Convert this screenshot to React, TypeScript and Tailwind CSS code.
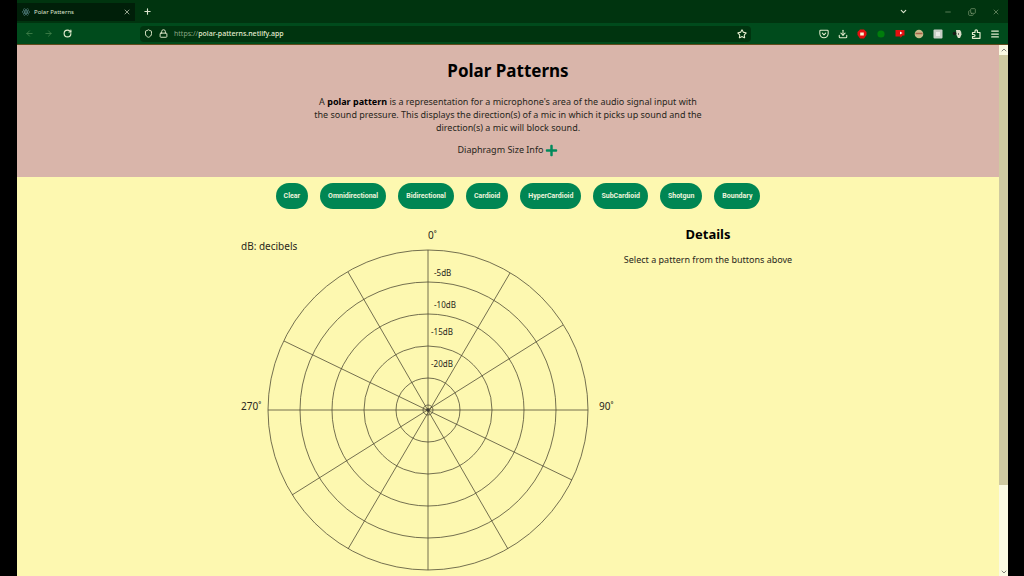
import React from "react";
import { ArrowLeft, ArrowRight, ChevronDown, ChevronUp, Copy, Download, Lock, Menu, Minus, Plus, RotateCw, Shield, Star, X } from "lucide-react";
import { FaReact, FaPlus } from "react-icons/fa";
import { FiPocket } from "react-icons/fi";

const patterns = ["Clear", "Omnidirectional", "Bidirectional", "Cardioid", "HyperCardioid", "SubCardioid", "Shotgun", "Boundary"];

const spokes = [
  [200, 20, 200, 340],
  [40, 180, 360, 180],
  [120, 42, 280, 319],
  [282, 43, 120, 319],
  [335, 95, 64, 265],
  [56, 111, 344, 250],
];

function PolarGrid() {
  return (
    <svg viewBox="0 -4 390 354" className="block h-auto w-full" fill="none" stroke="#514c36" strokeWidth="0.8" role="img" aria-label="Polar grid">
      {[160, 128, 96, 64, 32, 5].map((r) => (
        <circle key={r} cx="200" cy="180" r={r} />
      ))}
      {spokes.map(([x1, y1, x2, y2]) => (
        <line key={`${x1}-${y1}`} x1={x1} y1={y1} x2={x2} y2={y2} />
      ))}
      <circle cx="200" cy="180" r="1.5" fill="#333" />
      <g fill="#28261b" stroke="none" fontSize="10">
        <text x="200" y="9">0˚</text>
        <text x="13" y="20">dB: decibels</text>
        <text x="13" y="180">270˚</text>
        <text x="371" y="180">90˚</text>
      </g>
      <g fill="#28261b" stroke="none" fontSize="8">
        <text x="206" y="46">-5dB</text>
        <text x="206" y="78">-10dB</text>
        <text x="203" y="105">-15dB</text>
        <text x="203" y="137">-20dB</text>
      </g>
    </svg>
  );
}

function Toolbar() {
  return (
    <div className="flex h-[21px] items-center bg-[#004b1c] text-[#e4edcf]">
      <nav className="flex w-[123px] items-center gap-2.5 pl-2" aria-label="History">
        <button aria-label="Back" className="text-[#4a8750]"><ArrowLeft size={9} /></button>
        <button aria-label="Forward" className="text-[#4a8750]"><ArrowRight size={9} /></button>
        <button aria-label="Reload"><RotateCw size={9} strokeWidth={3} /></button>
      </nav>
      <div className="flex h-4 flex-1 items-center gap-1.5 rounded-sm bg-[#00340f] px-1">
        <Shield size={9} strokeWidth={2.5} />
        <Lock size={9} strokeWidth={2.5} />
        <span className="flex flex-1 text-[7px]">
          <span className="text-[#8aa783]">https://</span>
          <span className="font-medium">polar-patterns.netlify.app</span>
        </span>
        <button aria-label="Bookmark"><Star size={10} strokeWidth={2.5} /></button>
      </div>
      <div className="ml-[68px] flex items-center gap-[9px] pr-2">
        <button aria-label="Pocket"><FiPocket size={10} strokeWidth={2.5} /></button>
        <button aria-label="Downloads"><Download size={10} strokeWidth={2.5} /></button>
        <button aria-label="Blocker">
          <svg viewBox="0 0 10 10" className="size-2.5"><path d="M3 .5h4L9.500 3v3L7 9.500H3L.5 6V3z" fill="#e30f0f" /><path d="M3.200 3.500h3.600v3H3.200z" fill="#fff2d0" /></svg>
        </button>
        <button aria-label="Tracker guard">
          <svg viewBox="0 0 10 10" className="size-2.5"><circle cx="5" cy="5" r="3.6" fill="#007d0c" /></svg>
        </button>
        <button aria-label="Video tool">
          <svg viewBox="0 0 10 10" className="size-2.5"><path d="M.5 1h9v5.500H7.500L5.500 9V7.500h-5z" fill="#e30f0f" /><path d="M5 2.500l2.500 1.500L5 5.500z" fill="#fff" /></svg>
        </button>
        <button aria-label="Cookies">
          <svg viewBox="0 0 10 10" className="size-2.5"><circle cx="5" cy="5" r="4.300" fill="#c7ba8a" /><path d="M1.500 4.500h7" stroke="#a8644a" strokeWidth="1.500" /></svg>
        </button>
        <button aria-label="Notes">
          <svg viewBox="0 0 10 10" className="size-2.5"><rect x=".5" y=".5" width="9" height="9" rx="1" fill="#c8cec6" /><path d="M3 3h4v4H3z" fill="#e9eae6" /></svg>
        </button>
        <button aria-label="Color picker">
          <svg viewBox="0 0 10 10" className="size-2.5"><path d="M4 1h4Q9.500 2 9.500 5.500L8 9H6L4.500 6z" fill="#d9dcc8" /><circle cx="2.500" cy="4.500" r="1.800" fill="#171c16" /><path d="M6.500 4v2" stroke="#6b7064" /></svg>
        </button>
        <button aria-label="Extensions">
          <svg viewBox="0 0 10 10" className="size-2.5" fill="none" stroke="currentColor" strokeWidth="1.200" strokeLinejoin="round">
            <path d="M1.500 3.500H4V2a1.200 1.200 0 0 1 2.400 0v1.500H9v5.800H1.500V7.500H3a1 1 0 0 0 0-2H1.500z" />
          </svg>
        </button>
        <button aria-label="Menu"><Menu size={10} strokeWidth={3} /></button>
      </div>
    </div>
  );
}

export default function App() {
  return (
    <div className="h-screen bg-black pr-4 pl-[17px] font-['Noto_Sans',sans-serif]">
      <div className="flex h-full flex-col overflow-hidden">
        <header className="shrink-0 border-b border-[#604b1b] leading-none">
          <div className="flex h-[23px] items-center bg-[#00340f] text-[#dce5cf]">
            <div className="flex h-[18px] w-[118px] items-center gap-1 bg-[#001f09] pr-1 pl-[5px] text-[6px]">
              <FaReact size={8} className="text-[#75a9b3]" />
              <span className="flex-1">Polar Patterns</span>
              <button aria-label="Close tab"><X size={8} /></button>
            </div>
            <button aria-label="New tab" className="ml-2"><Plus size={9} strokeWidth={3} /></button>
            <div className="ml-auto flex items-center pr-2">
              <button aria-label="List tabs" className="mr-9"><ChevronDown size={9} strokeWidth={3} /></button>
              <div className="flex gap-4 text-[#84a078]">
                <button aria-label="Minimize"><Minus size={8} /></button>
                <button aria-label="Restore"><Copy size={8} className="-scale-y-100" /></button>
                <button aria-label="Close"><X size={8} /></button>
              </div>
            </div>
          </div>
          <Toolbar />
        </header>

        <div className="flex min-h-0 flex-1">
          <main className="min-w-0 flex-1 overflow-hidden bg-[#fdf8b0] text-[#28261b]">
            <section className="flex h-[132px] flex-col items-center bg-[#d9b5aa] pt-4 text-center">
              <h1 className="text-[17px] leading-5 font-bold text-black">Polar Patterns</h1>
              <p className="mt-3.5 max-w-[390px] text-[9px] leading-[13px]">
                A <strong className="text-black">polar pattern</strong> is a representation for a microphone's area of the audio signal input with the sound pressure. This displays the direction(s) of a mic in which it picks up sound and the direction(s) a mic will block sound.
              </p>
              <button className="mt-2 flex items-center gap-0.5 text-[9px] leading-4">
                Diaphragm Size Info
                <FaPlus size={13} className="text-[#008a5c]" />
              </button>
            </section>

            <div className="flex justify-center gap-3 pt-1.5 pl-5">
              {patterns.map((name) => (
                <button key={name} className="h-[26px] rounded-full bg-[#008653] px-2 font-[Roboto,sans-serif] text-[7px] leading-none font-bold text-[#eef4dc]">
                  {name}
                </button>
              ))}
            </div>

            <div className="flex items-start justify-center gap-1.5 pt-[17px] pl-1">
              <div className="w-[390px] shrink-0">
                <PolarGrid />
              </div>
              <section className="shrink-0 text-center">
                <h2 className="text-[13px] leading-4 font-bold text-black">Details</h2>
                <p className="mt-3 text-[9px] leading-3">Select a pattern from the buttons above</p>
              </section>
            </div>
          </main>
          <aside className="flex w-[9px] shrink-0 flex-col items-center bg-[#fbfae2] text-[#444]" aria-label="Scroll bar">
            <ChevronUp size={8} className="my-px" />
            <div className="h-[430px] w-full bg-[#cfcaa0]" />
            <ChevronDown size={8} className="mt-auto" />
          </aside>
        </div>
      </div>
    </div>
  );
}
